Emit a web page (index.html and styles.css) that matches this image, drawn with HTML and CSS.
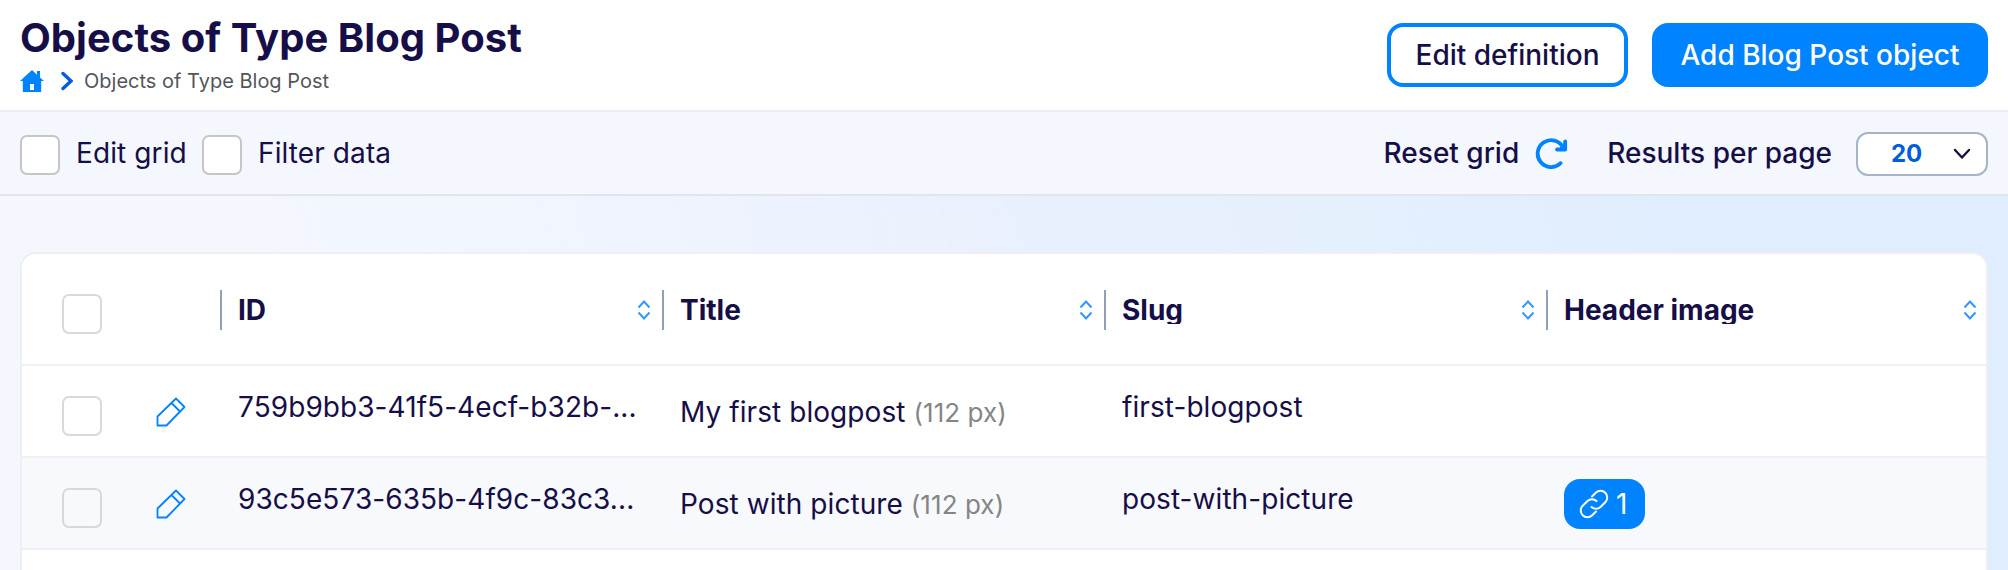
FILE: index.html
```
<!DOCTYPE html>
<html lang="en">
<head>
<meta charset="utf-8">
<title>Objects of Type Blog Post</title>
<link rel="stylesheet" href="styles.css">
</head>
<body>
<svg width="0" height="0" class="sprite" aria-hidden="true">
  <symbol id="sort" viewBox="0 0 14 22"><path d="M1.500 8.500 7 2.500 12.500 8.500M1.500 13.500 7 19.500 12.500 13.500"/></symbol>
  <symbol id="pencil" viewBox="0 0 30 30"><path d="M1.500 28.500V19.500L20 1.500 28.500 10 10.500 28.500ZM15.500 6l8.500 8.500"/></symbol>
</svg>
<header class="page-header">
  <div class="heading">
    <h1 class="title">Objects of Type Blog Post</h1>
    <nav class="breadcrumb">
      <svg class="home" width="24" height="22" viewBox="0 0 24 22"><path fill-rule="evenodd" d="M12 0 17 4.700V1h3v6.600L24 11h-2.800v11H2.800V11H0ZM10 14v6h4v-6Z"/></svg>
      <svg class="crumb-arrow" width="12" height="20" viewBox="0 0 12 20"><path d="M2 2.500 10 10 2 17.500"/></svg>
      <span class="crumb">Objects of Type Blog Post</span>
    </nav>
  </div>
  <div class="actions">
    <button class="btn btn-outline">Edit definition</button>
    <button class="btn btn-primary">Add Blog Post object</button>
  </div>
</header>
<section class="toolbar">
  <label class="toggle toggle-edit"><span class="check"></span><span>Edit grid</span></label>
  <label class="toggle"><span class="check"></span><span>Filter data</span></label>
  <div class="tools">
    <span>Reset grid</span>
    <svg class="reload" width="34" height="32" viewBox="0 0 34 32"><path d="M29 10.500A13.400 13.400 0 1 0 26.500 26.200M31.200 4.500v8H23"/><path class="fill" d="M31.200 5v7.500h-6Z"/></svg>
    <span>Results per page</span>
    <div class="select"><span>20</span><svg width="18" height="12" viewBox="0 0 18 12"><path d="M2 2 9 9.500 16 2"/></svg></div>
  </div>
</section>
<main class="content">
  <div class="grid">
    <div class="row head">
      <div class="cell-check"><span class="check"></span></div><div></div>
      <div class="th"><span class="label">ID</span><svg class="sort"><use href="#sort"/></svg></div>
      <div class="th"><span class="label">Title</span><svg class="sort"><use href="#sort"/></svg></div>
      <div class="th"><span class="label">Slug</span><svg class="sort"><use href="#sort"/></svg></div>
      <div class="th"><span class="label">Header image</span><svg class="sort"><use href="#sort"/></svg></div>
    </div>
    <div class="row">
      <div class="cell-check"><span class="check"></span></div>
      <div class="cell-edit"><svg class="pencil"><use href="#pencil"/></svg></div>
      <div class="td">759b9bb3-41f5-4ecf-b32b-...</div>
      <div class="td td-title">My first blogpost <span class="px">(112 px)</span></div>
      <div class="td">first-blogpost</div>
      <div class="td"></div>
    </div>
    <div class="row alt">
      <div class="cell-check"><span class="check"></span></div>
      <div class="cell-edit"><svg class="pencil"><use href="#pencil"/></svg></div>
      <div class="td">93c5e573-635b-4f9c-83c3...</div>
      <div class="td td-title">Post with picture <span class="px">(112 px)</span></div>
      <div class="td">post-with-picture</div>
      <div class="td td-badge"><span class="badge"><svg width="30" height="30" viewBox="0 0 30 30"><path d="M13 7.500 16.800 3.700A6.600 6.600 0 0 1 26.300 13.200L21.500 18A6.600 6.600 0 0 1 12.500 18M17 22.500 13.200 26.300A6.600 6.600 0 0 1 3.700 16.800L8.500 12A6.600 6.600 0 0 1 17.500 12"/></svg>1</span></div>
    </div>
    <div class="row"></div>
  </div>
</main>
</body>
</html>
```
FILE: styles.css
```
* { box-sizing: border-box; }
body {
  margin: 0;
  width: 2008px;
  height: 570px;
  overflow: hidden;
  display: flex;
  flex-direction: column;
  font-family: Inter, "Liberation Sans", sans-serif;
  font-size: 28px;
  line-height: 34px;
  color: #160e47;
  background: #fff;
}
svg { display: block; flex: none; fill: none; }
.sprite { display: none; }
.page-header {
  height: 112px;
  flex: none;
  padding: 0 20px;
  display: flex;
  justify-content: space-between;
  border-bottom: 2px solid #ecedf4;
}
.heading { padding-top: 14px; }
.title { margin: 0; font-size: 40px; line-height: 48px; font-weight: 700; letter-spacing: 0.04px; }
.breadcrumb { display: flex; align-items: center; height: 38px; }
.home { fill: #0083ff; }
.crumb-arrow { margin: 0 11px 0 17px; stroke: #005ddc; stroke-width: 3.4; stroke-linecap: round; }
.crumb { font-size: 20px; line-height: 24px; color: #55555c; }
.actions { display: flex; gap: 24px; padding-top: 23px; }
.btn {
  height: 64px;
  padding: 0;
  font: inherit;
  font-weight: 500;
  border: 4px solid #0083ff;
  border-radius: 16px;
}
.btn-outline { width: 241px; color: #160e47; background: #fff; }
.btn-primary { width: 336px; color: #fff; background: #0083ff; }
.toolbar {
  height: 84px;
  flex: none;
  padding: 0 20px;
  display: flex;
  align-items: center;
  background: #f4f7fe;
  border-bottom: 2px solid #e2e6ec;
}
.check {
  width: 40px;
  height: 40px;
  flex: none;
  background: #fff;
  border: 2px solid #c6c6c6;
  border-radius: 7px;
}
.toggle { display: flex; align-items: center; gap: 16px; height: 40px; margin-top: 4px; letter-spacing: 0.1px; }
.toggle span + span { margin-top: -4px; }
.toggle-edit { width: 182px; }
.tools { margin-left: auto; display: flex; align-items: center; font-weight: 500; }
.reload { margin: 0 39px 0 15px; stroke: #0083ff; stroke-width: 3.8; stroke-linecap: round; stroke-linejoin: round; }
.reload .fill { fill: #0083ff; stroke-width: 1; }
.select {
  width: 132px;
  height: 44px;
  margin: 2px 0 0 24px;
  padding: 0 15px 0 33px;
  display: flex;
  align-items: center;
  justify-content: space-between;
  background: #fff;
  border: 2px solid #a5b4c6;
  border-radius: 12px;
  font-size: 24px;
  font-weight: 700;
  color: #005ddc;
}
.select svg { stroke: #160e47; stroke-width: 2.4; stroke-linecap: round; stroke-linejoin: round; }
.content {
  flex: 1;
  padding: 56px 20px 0;
  background: linear-gradient(75deg, #f4f7fe 0%, #f4f7fe 15%, #eff4fe 35%, #e9f0fd 54%, #e5f0fd 68%, #e0edfe 85%, #e0edfe 100%);
}
.grid {
  height: 340px;
  background: #fff;
  border: 2px solid #eeeff4;
  border-radius: 16px;
  overflow: hidden;
}
.row {
  height: 92px;
  display: grid;
  grid-template-columns: 112px 86px repeat(4, 442px);
  border-bottom: 2px solid #f0f1f5;
}
.head { height: 112px; }
.alt { background: #f8f9fd; }
.cell-check { padding: 30px 0 0 40px; display: flex; }
.head .cell-check { padding-top: 40px; }
.cell-check .check { border-color: #d9d9d9; }
.alt .check { background: transparent; }
.cell-edit { padding: 31px 0 0 22px; }
.pencil { width: 30px; height: 30px; stroke: #0083ff; stroke-width: 1.8; stroke-linejoin: round; }
.th {
  height: 40px;
  margin-top: 36px;
  padding: 0 11px 0 16px;
  display: flex;
  align-items: center;
  justify-content: space-between;
  border-left: 2px solid #8fa1b8;
  font-weight: 700;
}
.label { height: 28px; line-height: 28px; overflow: hidden; }
.sort { width: 14px; height: 22px; stroke: #3397ff; stroke-width: 2; }
.td { padding: 24px 0 0 18px; white-space: nowrap; letter-spacing: 0.07px; }
.td-title { padding-top: 29px; }
.px { font-size: 26px; color: #858585; }
.td-badge { padding-top: 21px; }
.badge {
  width: 81px;
  height: 50px;
  padding-left: 15px;
  display: flex;
  align-items: center;
  gap: 7px;
  color: #fff;
  background: #0083ff;
  border-radius: 16px;
}
.badge svg { stroke: #fff; stroke-width: 2; stroke-linecap: round; }
```
